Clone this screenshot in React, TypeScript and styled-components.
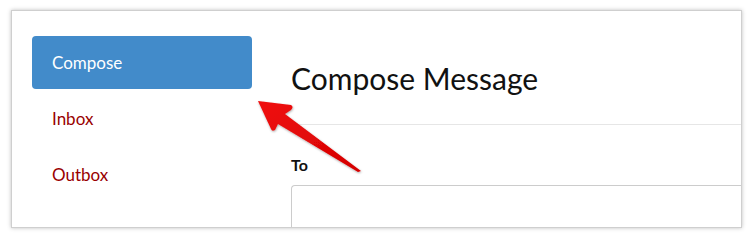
import React from "react";
import styled, { createGlobalStyle } from "styled-components";

const GlobalStyle = createGlobalStyle`
  html, body {
    margin: 0;
    padding: 0;
    background: #ffffff;
  }
  body {
    font-family: "Lato", "Liberation Sans", sans-serif;
  }
`;

const Page = styled.div`
  width: 752px;
  height: 238px;
  padding: 10px 10px 0 11px;
  box-sizing: border-box;
`;

const Card = styled.div`
  position: relative;
  width: 731px;
  height: 218px;
  box-sizing: border-box;
  border: 1px solid #cfcfcf;
  box-shadow: 0 0 4px rgba(0, 0, 0, 0.25);
  background: #fff;
  overflow: hidden;
  display: flex;
  align-items: flex-start;
`;

const Sidebar = styled.nav`
  width: 220px;
  padding: 25px 0 0 20px;
  display: flex;
  flex-direction: column;
  gap: 3px;
  flex-shrink: 0;
`;

const NavItem = styled.a<{ $active?: boolean }>`
  display: flex;
  align-items: center;
  height: 53px;
  padding-left: 20px;
  border-radius: 4px;
  font-size: 17px;
  text-decoration: none;
  color: ${(p) => (p.$active ? "#ffffff" : "#990000")};
  background: ${(p) => (p.$active ? "#428bca" : "transparent")};
`;

const Main = styled.main`
  flex: 1;
  margin-left: 39px;
  display: flex;
  flex-direction: column;
  & > * {
    flex-shrink: 0;
  }
`;

const Header = styled.div`
  height: 114px;
  padding-top: 47px;
  box-sizing: border-box;
  border-bottom: 1px solid #e6e6e6;
`;

const Title = styled.h1`
  margin: 0;
  font-size: 30px;
  font-weight: 400;
  color: #111;
  line-height: 40px;
`;

const Field = styled.div`
  padding-top: 30px;
  display: flex;
  flex-direction: column;
  gap: 11px;
`;

const Label = styled.label`
  font-size: 16px;
  font-weight: 700;
  color: #111;
`;

const Input = styled.div`
  height: 60px;
  border: 1px solid #cccccc;
  border-right: none;
  border-radius: 4px 0 0 4px;
`;

const ArrowSvg = styled.svg`
  position: absolute;
  left: 0;
  top: 0;
  pointer-events: none;
`;

const Arrow = () => (
  <ArrowSvg width="731" height="218" viewBox="11 10 731 218">
    <defs>
      <linearGradient id="arrowRed" x1="0" y1="0" x2="1" y2="1">
        <stop offset="0" stopColor="#f01010" />
        <stop offset="1" stopColor="#d40000" />
      </linearGradient>
      <filter id="arrowShadow" x="-20%" y="-20%" width="140%" height="140%">
        <feDropShadow dx="0.5" dy="1" stdDeviation="1" floodColor="#000" floodOpacity="0.35" />
      </filter>
    </defs>
    <path
      d="M257 100 L290 104 Q293 106 290 109 L284 113 L360 170 L357 171 L277 123 L274 129 Q271 131 270 128 Z"
      fill="url(#arrowRed)"
      filter="url(#arrowShadow)"
    />
  </ArrowSvg>
);

export default function App() {
  return (
    <>
      <GlobalStyle />
      <Page>
        <Card>
          <Sidebar>
            <NavItem $active>Compose</NavItem>
            <NavItem>Inbox</NavItem>
            <NavItem>Outbox</NavItem>
          </Sidebar>
          <Main>
            <Header>
              <Title>Compose Message</Title>
            </Header>
            <Field>
              <Label>To</Label>
              <Input />
            </Field>
          </Main>
          <Arrow />
        </Card>
      </Page>
    </>
  );
}
